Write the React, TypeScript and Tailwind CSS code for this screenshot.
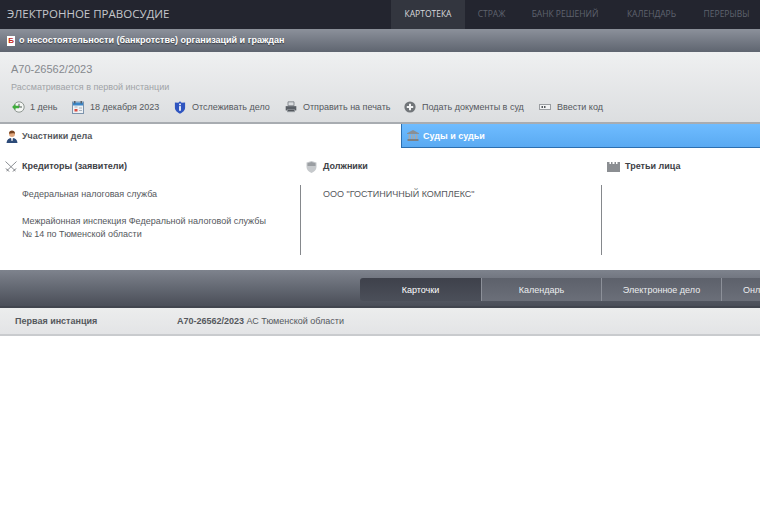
import React from 'react';

const font = 'font-["Liberation_Sans",Arial,sans-serif]';

const ClockIcon = () => (
  <svg width="13" height="12" viewBox="0 0 13 12">
    <circle cx="7" cy="6" r="5.2" fill="#f4f6f4" stroke="#8d9590" strokeWidth="1" />
    <path d="M7 2.8V6h3" fill="none" stroke="#4a5a50" strokeWidth="1" />
    <path d="M0 6 3.6 3V4.8H7V7.2H3.6V9Z" fill="#3fae3c" />
  </svg>
);

const CalendarIcon = () => (
  <svg width="12" height="13" viewBox="0 0 12 13">
    <rect x="0.5" y="1" width="11" height="11.5" fill="#eef1f4" stroke="#7d94ad" />
    <rect x="1" y="1.5" width="10" height="3" fill="#3b87c9" />
    <rect x="2" y="0" width="1.5" height="2.5" fill="#55606c" />
    <rect x="8.5" y="0" width="1.5" height="2.5" fill="#55606c" />
    <rect x="2.5" y="8" width="3" height="2.5" fill="#d84b3f" />
    <path d="M7 7h3M7 9.5h3M2.5 6h3" stroke="#a9b4bf" strokeWidth="1" />
  </svg>
);

const ShieldInfoIcon = () => (
  <svg width="12" height="13" viewBox="0 0 12 14">
    <path d="M6 0.3 7.8 1.8 11.5 1.6V7C11.5 10.5 8.5 12.5 6 13.7 3.5 12.5 0.5 10.5 0.5 7V1.6L4.2 1.8Z" fill="#2f55c0" />
    <rect x="5.1" y="2.8" width="1.8" height="1.8" fill="#fff" />
    <rect x="5.1" y="5.5" width="1.8" height="5" fill="#fff" />
  </svg>
);

const PrinterIcon = () => (
  <svg width="12" height="12" viewBox="0 0 14 13">
    <path d="M3.5 0.5H10.5V5H3.5Z" fill="#d9dcdf" stroke="#7b8085" />
    <path d="M0.8 5.5H13.2V10.5H0.8Z" fill="#5a5f66" />
    <path d="M2.5 9H11.5V12.5H2.5Z" fill="#8d9297" />
    <path d="M3.5 10.5H10.5" stroke="#43474c" />
  </svg>
);

const PlusIcon = () => (
  <svg width="12" height="12" viewBox="0 0 12 12">
    <circle cx="6" cy="6" r="5.6" fill="#717579" />
    <path d="M6 2.8V9.2M2.8 6H9.2" stroke="#f2f3f4" strokeWidth="2" />
  </svg>
);

const CodeIcon = () => (
  <svg width="12" height="6" viewBox="0 0 12 6">
    <rect x="0.5" y="0.5" width="11" height="5" fill="#f1f2f3" stroke="#9a9da1" />
    <path d="M2.5 3H4M5 3H6.5" stroke="#53575b" strokeWidth="2" />
  </svg>
);

const PersonIcon = () => (
  <svg width="12" height="13" viewBox="0 0 12 13">
    <path d="M0.5 13C0.8 9.6 2.6 8 6 8S11.2 9.6 11.5 13Z" fill="#2c4a78" />
    <path d="M5 8H7L6.5 11H5.5Z" fill="#f1f1f1" />
    <circle cx="6" cy="4" r="3" fill="#e0a77e" />
    <path d="M3 3.8C3 1.4 4.4 0.5 6 0.5S9 1.4 9 3.8C7.6 3 5 3.2 3 3.8Z" fill="#75421f" />
  </svg>
);

const BankIcon = () => (
  <svg width="12" height="11" viewBox="0 0 12 11">
    <path d="M6 0 12 3.2V4H0V3.2Z" fill="#8a8f94" />
    <path d="M1.5 4.5H3V9H1.5ZM4 4.5H5.5V9H4ZM6.5 4.5H8V9H6.5ZM9 4.5H10.5V9H9Z" fill="#a5a9ad" />
    <rect x="0.5" y="9" width="11" height="2" fill="#7b8085" />
  </svg>
);

const SwordsIcon = () => (
  <svg width="12" height="11" viewBox="0 0 12 11">
    <path d="M0.5 0.5 10.5 10M11.5 0.5 1.5 10" stroke="#8a8e93" strokeWidth="1" fill="none" />
    <path d="M1 7.5 4 10.5M11 7.5 8 10.5" stroke="#66696e" strokeWidth="1" fill="none" />
  </svg>
);

const ShieldIcon = () => (
  <svg width="11" height="12" viewBox="0 0 11 12">
    <path d="M5.5 0 10.5 1.5V6C10.5 9 8 11 5.5 12 3 11 .5 9 .5 6V1.5Z" fill="#c6c9cc" />
    <path d="M5.5 1 9.5 2.2V5H1.5V2.2Z" fill="#9a9ea2" />
  </svg>
);

const CastleIcon = () => (
  <svg width="13" height="10" viewBox="0 0 13 10">
    <path d="M0 0H2.5V2H4V0H5.5V2H7.5V0H9V2H10.5V0H13V10H0Z" fill="#8b8e92" />
  </svg>
);

const actions = [
  { icon: <ClockIcon />, label: '1 день', gap: 'gap-[5px]', w: 'w-[60px]' },
  { icon: <CalendarIcon />, label: '18 декабря 2023', gap: 'gap-[6px]', w: 'w-[102px]' },
  { icon: <ShieldInfoIcon />, label: 'Отслеживать дело', gap: 'gap-[6px]', w: 'w-[111px]' },
  { icon: <PrinterIcon />, label: 'Отправить на печать', gap: 'gap-[6px]', w: 'w-[119px]' },
  { icon: <PlusIcon />, label: 'Подать документы в суд', gap: 'gap-[6px]', w: 'w-[135px]' },
  { icon: <CodeIcon />, label: 'Ввести код', gap: 'gap-[6px]', w: 'w-auto' },
];

const nav = [
  { label: 'КАРТОТЕКА', cls: 'w-[74px] bg-[#33363f] text-[#d8d9dc]' },
  { label: 'СТРАЖ', cls: 'w-[53px] text-[#5f636e]' },
  { label: 'БАНК РЕШЕНИЙ', cls: 'w-[94px] text-[#5f636e]' },
  { label: 'КАЛЕНДАРЬ', cls: 'w-[79px] text-[#5f636e]' },
  { label: 'ПЕРЕРЫВЫ', cls: 'w-[69px] pl-[2px] text-[#5f636e]' },
];

export default function App() {
  return (
    <div className={`${font} w-[760px] h-[506px] overflow-hidden bg-white text-[9px] text-[#55585d]`}>
      {/* top navigation */}
      <div className="flex h-[29px] justify-between bg-[#23252f]">
        <div className="pl-[7px] pt-[6px] font-['Open_Sans',sans-serif] text-[11.5px] leading-[15px] text-[#c5c7cc]">ЭЛЕКТРОННОЕ ПРАВОСУДИЕ</div>
        <div className="flex">
          {nav.map((n) => (
            <div key={n.label} className={`flex items-center justify-center font-['Open_Sans',sans-serif] text-[8.5px] ${n.cls}`}>{n.label}</div>
          ))}
        </div>
      </div>

      <div className="flex h-[23px] items-center gap-[4px] border-t border-[#8a8f98] bg-gradient-to-b from-[#8a8f99] to-[#5f6570] pl-[7px]">
        <div className="flex h-[10px] w-[8px] items-center justify-center bg-white text-[8px] leading-none font-bold text-[#c42a23]">Б</div>
        <span className="font-bold text-white [text-shadow:0_1px_1px_#3a3d44]">о несостоятельности (банкротстве) организаций и граждан</span>
      </div>

      {/* case header */}
      <div className="h-[72px] border-b-2 border-[#a8acb1] bg-gradient-to-b from-[#eff0f1] to-[#dcdee0] pl-[11px]">
        <div className="pt-[10px] text-[11px] leading-[15px] text-[#86898e]">А70-26562/2023</div>
        <div className="pt-[4px] leading-[12px] text-[#a0a3a7]">Рассматривается в первой инстанции</div>
        <div className="ml-px flex h-[24px] items-center pt-[4px]">
          {actions.map((a) => (
            <div key={a.label} className={`flex items-center ${a.gap} ${a.w} shrink-0 whitespace-nowrap`}>
              {a.icon}
              <span className="pt-px">{a.label}</span>
            </div>
          ))}
        </div>
      </div>

      {/* tabs */}
      <div className="flex h-[24px]">
        <div className="flex w-[401px] items-center gap-[4px] pl-[6px] font-bold">
          <PersonIcon />
          <span className="pt-[2px]">Участники дела</span>
        </div>
        <div className="flex flex-1 items-center gap-[4px] border-b border-l border-[#2c6fb0] bg-gradient-to-b from-[#6fbcff] to-[#5aaaf2] pl-[5px] font-bold text-white">
          <BankIcon />
          <span className="pt-[2px]">Суды и судьи</span>
        </div>
      </div>

      {/* participants */}
      <div className="grid h-[122px] grid-cols-[301px_301px_158px] pt-[12px]">
        <div>
          <div className="flex h-[13px] items-center gap-[5px] pl-[5px] font-bold text-[#3e4146]">
            <SwordsIcon />
            <span className="pt-px">Кредиторы (заявители)</span>
          </div>
          <div className="mt-[12px] h-[70px] border-r border-[#85888c] pl-[22px] pt-[3px] leading-[13.5px]">
            <p>Федеральная налоговая служба</p>
            <p className="mt-[13px]">Межрайонная инспекция Федеральной налоговой службы<br />№ 14 по Тюменской области</p>
          </div>
        </div>
        <div>
          <div className="flex h-[13px] items-center gap-[6px] pl-[5px] font-bold text-[#3e4146]">
            <ShieldIcon />
            <span className="pt-px">Должники</span>
          </div>
          <div className="mt-[12px] h-[70px] border-r border-[#85888c] pl-[22px] pt-[3px] leading-[13.5px]">
            <p>ООО "ГОСТИНИЧНЫЙ КОМПЛЕКС"</p>
          </div>
        </div>
        <div>
          <div className="flex h-[13px] items-center gap-[5px] pl-[5px] font-bold text-[#3e4146]">
            <CastleIcon />
            <span className="pt-px">Третьи лица</span>
          </div>
        </div>
      </div>

      {/* instance tabs */}
      <div className="flex h-[38px] items-start overflow-hidden border-b-2 border-[#41454e] bg-gradient-to-b from-[#7e838d] to-[#4a4e58] pl-[360px] pt-[8px]">
        <div className="flex h-[23px] w-[121px] shrink-0 items-center justify-center rounded-l-[3px] bg-gradient-to-b from-[#3e414b] to-[#4b4f59] pt-[2px] text-white">Карточки</div>
        <div className="flex h-[23px] w-[120px] shrink-0 items-center justify-center border-l border-[#8c9099] bg-gradient-to-b from-[#5d616b] to-[#6b6f79] pt-[2px] text-[#eceef0]">Календарь</div>
        <div className="flex h-[23px] w-[120px] shrink-0 items-center justify-center border-l border-[#8c9099] bg-gradient-to-b from-[#5d616b] to-[#6b6f79] pt-[2px] text-[#eceef0]">Электронное дело</div>
        <div className="flex h-[23px] w-[120px] shrink-0 items-center border-l border-[#8c9099] bg-gradient-to-b from-[#5d616b] to-[#6b6f79] pl-[21px] pt-[2px] text-[#eceef0]">Онлайн</div>
      </div>

      {/* instance row */}
      <div className="flex h-[28px] items-center border-b-2 border-[#c9cbce] bg-gradient-to-b from-[#eceded] to-[#e3e4e6] pt-px">
        <div className="w-[177px] pl-[15px] font-bold">Первая инстанция</div>
        <div><b>А70-26562/2023</b> АС Тюменской области</div>
      </div>
    </div>
  );
}
